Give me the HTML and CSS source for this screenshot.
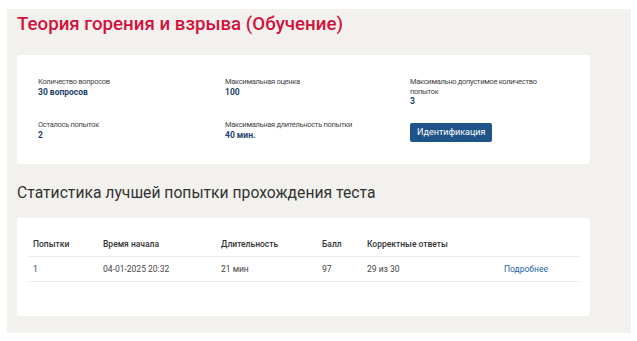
FILE: index.html
```html
<!DOCTYPE html>
<html lang="ru">
<head>
    <meta charset="UTF-8">
    <meta name="viewport" content="width=device-width, initial-scale=1.0">
    <title>Теория горения и взрыва</title>
    <link rel="stylesheet" href="styles.css">
</head>
<body>
    <div class="page">
        <h1 class="course-title">Теория горения и взрыва (Обучение)</h1>

        <div class="panel info-panel">
            <div class="info-grid">
                <div class="info-item">
                    <div class="info-label">Количество вопросов</div>
                    <div class="info-value">30 вопросов</div>
                </div>
                <div class="info-item">
                    <div class="info-label">Максимальная оценка</div>
                    <div class="info-value">100</div>
                </div>
                <div class="info-item info-wrap">
                    <div class="info-label">Максимально допустимое количество попыток</div>
                    <div class="info-value">3</div>
                </div>
                <div class="info-item">
                    <div class="info-label">Осталось попыток</div>
                    <div class="info-value">2</div>
                </div>
                <div class="info-item">
                    <div class="info-label">Максимальная длительность попытки</div>
                    <div class="info-value">40 мин.</div>
                </div>
                <div class="info-item">
                    <button class="btn btn-primary">Идентификация</button>
                </div>
            </div>
        </div>

        <h2 class="section-title">Статистика лучшей попытки прохождения теста</h2>

        <div class="panel stats-panel">
            <table>
                <thead>
                    <tr>
                        <th class="col-try">Попытки</th>
                        <th class="col-start">Время начала</th>
                        <th class="col-dur">Длительность</th>
                        <th class="col-score">Балл</th>
                        <th class="col-correct">Корректные ответы</th>
                        <th></th>
                    </tr>
                </thead>
                <tbody>
                    <tr>
                        <td>1</td>
                        <td>04-01-2025 20:32</td>
                        <td>21 мин</td>
                        <td>97</td>
                        <td>29 из 30</td>
                        <td><a href="#">Подробнее</a></td>
                    </tr>
                </tbody>
            </table>
        </div>
    </div>
</body>
</html>
```

FILE: styles.css
```css
body {
    margin: 0;
    padding: 9px 6px 9px 7px;
    background: #ffffff;
    font-family: Roboto, "Liberation Sans", sans-serif;
    color: #333;
}
.page {
    background: #f2f1ee;
    padding: 3px 41px 17px 10px;
}
.course-title {
    margin: 0;
    font-size: 18.7px;
    line-height: 24px;
    font-weight: 500;
    color: #d3113c;
}
.panel {
    background: #fff;
    border-radius: 3px;
}
.info-panel {
    margin-top: 19px;
    padding: 22px 21px 22px 21px;
}
.info-grid {
    display: grid;
    grid-template-columns: 187px 185px 1fr;
    row-gap: 14px;
}
.info-label {
    font-size: 7.5px;
    line-height: 9.5px;
    letter-spacing: -0.3px;
    color: #444;
}
.info-wrap .info-label {
    max-width: 135px;
}
.info-value {
    font-size: 8.5px;
    line-height: 10px;
    font-weight: 700;
    color: #1d3f6a;
}
.btn {
    border: none;
    border-radius: 2px;
    cursor: pointer;
    font-family: inherit;
}
.btn-primary {
    margin-top: 1px;
    background: #1f548b;
    color: #fff;
    font-size: 9px;
    height: 19px;
    padding: 0 7px;
}
.section-title {
    margin: 17px 0 0;
    font-size: 15.7px;
    line-height: 24px;
    font-weight: 400;
    color: #333;
}
.stats-panel {
    margin-top: 13px;
    padding: 14px 10px 34px 10px;
}
table {
    width: 100%;
    border-collapse: collapse;
    font-size: 8.5px;
}
table th, table td {
    padding: 0 6px;
    height: 24px;
    text-align: left;
    border-bottom: 1.5px solid #eeeeee;
}
table th {
    font-weight: 500;
    color: #333;
}
table td {
    color: #444;
}
.col-try { width: 58px; }
.col-start { width: 106px; }
.col-dur { width: 89px; }
.col-score { width: 33px; }
.col-correct { width: 125px; }
table a {
    color: #1f5fae;
    text-decoration: none;
}
```
